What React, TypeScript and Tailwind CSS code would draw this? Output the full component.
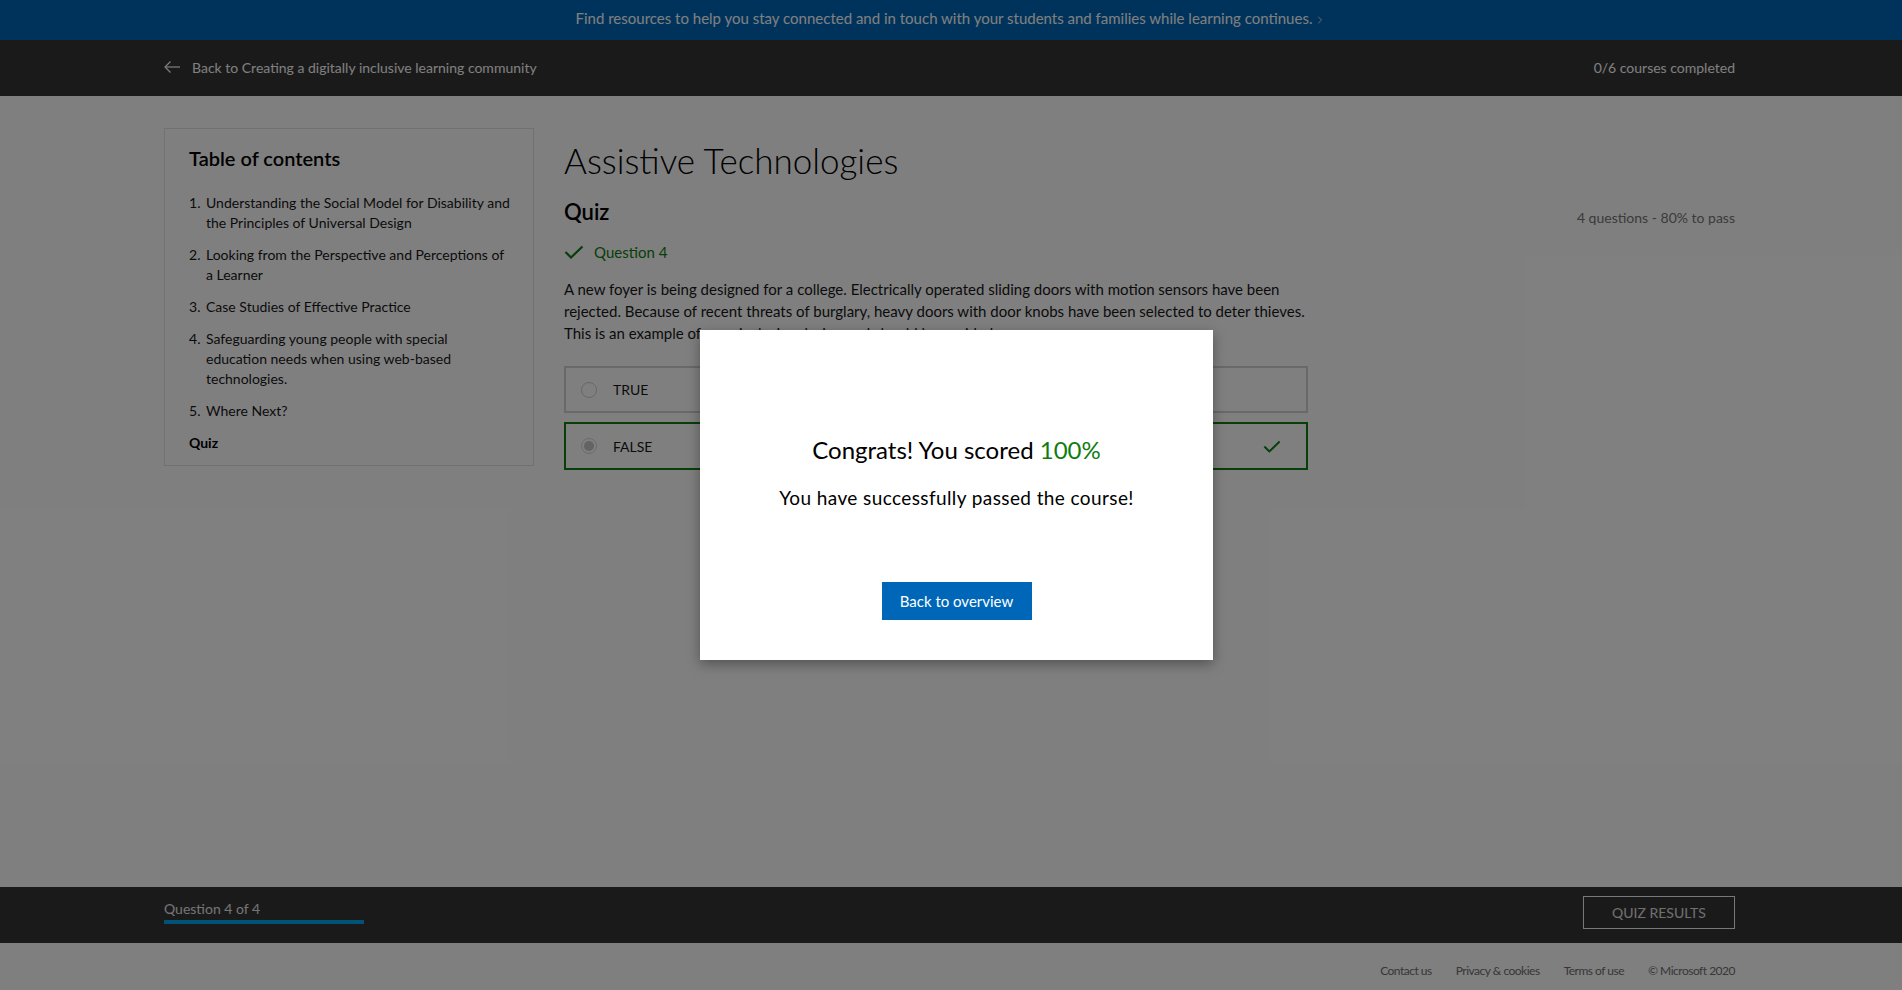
import { ChevronRight } from "lucide-react";

const toc = [
  "Understanding the Social Model for Disability and the Principles of Universal Design",
  "Looking from the Perspective and Perceptions of a Learner",
  "Case Studies of Effective Practice",
  "Safeguarding young people with special education needs when using web-based technologies.",
  "Where Next?",
];

function Check({ className }: { className?: string }) {
  return (
    <svg viewBox="0 0 20 14" className={className} fill="none">
      <polyline points="1.5,7 7,12.5 18.5,1.5" stroke="currentColor" strokeWidth="2.2" />
    </svg>
  );
}

export default function App() {
  return (
    <div className="relative min-h-screen flex flex-col bg-white text-[#171717] [font-family:'Segoe_UI',Lato,sans-serif]">
      {/* banner */}
      <div className="h-[40px] bg-[#0067b8] flex items-center justify-center pb-[4px] text-[15px] text-white">
        <span>Find resources to help you stay connected and in touch with your students and families while learning continues.</span>
        <ChevronRight size={12} strokeWidth={1.5} className="ml-[2px] mt-[4px]" />
      </div>

      {/* header */}
      <div className="h-[56px] bg-[#343434] text-white">
        <div className="w-[1571px] ml-[164px] h-full flex items-center justify-between pb-[2px] text-[14px]">
          <div className="flex items-center gap-[12px]">
            <svg viewBox="0 0 16 12" className="w-[16px] h-[12px]" fill="none">
              <line x1="1" y1="6" x2="16" y2="6" stroke="currentColor" strokeWidth="1.2" />
              <polyline points="6.5,0.5 1,6 6.5,11.5" stroke="currentColor" strokeWidth="1.2" />
            </svg>
            <span>Back to Creating a digitally inclusive learning community</span>
          </div>
          <span>0/6 courses completed</span>
        </div>
      </div>

      {/* main */}
      <div className="flex-1">
        <div className="w-[1571px] ml-[164px] pt-[32px] flex gap-[30px]">
          <div className="w-[370px] shrink-0 self-start border border-[#e3e3e3] pl-[24px] pr-[21px] pt-[15px] pb-[12px]">
            <h2 className="text-[20px] leading-[28px] font-semibold text-black">Table of contents</h2>
            <ol className="mt-[21px] flex flex-col gap-[12px] text-[14px] leading-[20px]">
              {toc.map((t, i) => (
                <li key={i} className="flex">
                  <span className="w-[17px] shrink-0">{i + 1}.</span>
                  <span>{t}</span>
                </li>
              ))}
              <li className="font-bold text-black">Quiz</li>
            </ol>
          </div>

          <div className="flex-1">
            <h1 className="mt-[12px] text-[35px] leading-[40px] font-light text-black">Assistive Technologies</h1>
            <div className="mt-[17px] flex justify-between">
              <h2 className="text-[22px] leading-[30px] font-semibold text-black">Quiz</h2>
              <span className="mt-[11px] text-[14px] leading-[20px] text-[#767676]">4 questions - 80% to pass</span>
            </div>
            <div className="w-[744px]">
              <div className="mt-[13px] flex items-center gap-[10px] text-[#107c10] text-[15px] leading-[22px]">
                <Check className="w-[20px] h-[14px]" />
                <span>Question 4</span>
              </div>
              <p className="mt-[15px] text-[15px] leading-[22px] text-[#171717]">
                A new foyer is being designed for a college. Electrically operated sliding doors with motion sensors have been rejected. Because of recent threats of burglary, heavy doors with door knobs have been selected to deter thieves. This is an example of poor inclusive design and should be avoided.
              </p>
              <div className="mt-[22px] flex flex-col gap-[9px]">
                <div className="h-[47px] border-2 border-[#d2d2d2] flex items-center px-[15px] gap-[16px]">
                  <span className="w-[16px] h-[16px] rounded-full border border-[#cfcfcf]" />
                  <span className="text-[14px]">TRUE</span>
                </div>
                <div className="h-[48px] border-2 border-[#107c10] flex items-center px-[15px] gap-[16px]">
                  <span className="w-[16px] h-[16px] rounded-full border border-[#d8d8d8] flex items-center justify-center">
                    <span className="w-[10px] h-[10px] rounded-full bg-[#c6c6c6]" />
                  </span>
                  <span className="text-[14px] flex-1">FALSE</span>
                  <Check className="w-[18px] h-[13px] mr-[10px] text-[#107c10]" />
                </div>
              </div>
            </div>
          </div>
        </div>
      </div>

      {/* bottom bar */}
      <div className="h-[56px] bg-[#343434] text-white">
        <div className="w-[1571px] ml-[164px] h-full flex items-start justify-between">
          <div className="pt-[12px] w-[200px]">
            <div className="text-[14px] leading-[20px] text-[#e8e8e8]">Question 4 of 4</div>
            <div className="mt-[1px] h-[4px] bg-[#00a4ef]" />
          </div>
          <div className="mt-[9px] w-[152px] h-[33px] border border-[#f0f0f0] flex items-center justify-center text-[14px] text-[#e0e0e0]">
            QUIZ RESULTS
          </div>
        </div>
      </div>

      {/* footer */}
      <div className="h-[47px] bg-white">
        <div className="w-[1571px] ml-[164px] h-full flex items-center justify-end gap-[24px] pt-[9px] text-[12px] tracking-[-0.5px] text-[#6e6e6e]">
          <span>Contact us</span>
          <span>Privacy &amp; cookies</span>
          <span>Terms of use</span>
          <span>© Microsoft 2020</span>
        </div>
      </div>

      {/* modal */}
      <div className="absolute inset-0 bg-black/50 flex items-center justify-center">
        <div className="ml-[11px] w-[513px] h-[330px] bg-white shadow-[0_4px_12px_rgba(0,0,0,0.35)] flex flex-col items-center pt-[104px]">
          <div className="text-[24px] leading-[32px] text-black">
            Congrats! You scored <span className="text-[#107c10]">100%</span>
          </div>
          <div className="mt-[20px] text-[19px] leading-[24px] tracking-[0.4px] text-black">You have successfully passed the course!</div>
          <button className="mt-[72px] w-[150px] h-[38px] bg-[#0067b8] text-white text-[15px]">Back to overview</button>
        </div>
      </div>
    </div>
  );
}
